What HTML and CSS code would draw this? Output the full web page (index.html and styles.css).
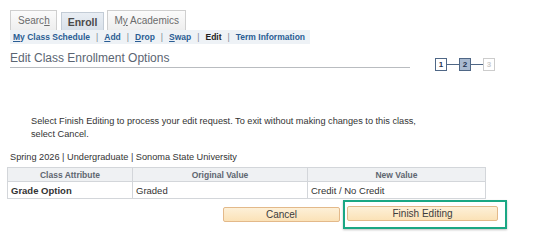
FILE: index.html
```html
<!DOCTYPE html>
<html lang="en">
<head>
    <meta charset="UTF-8">
    <title>Edit Class Enrollment Options</title>
    <link rel="stylesheet" href="styles.css">
</head>
<body>
    <div class="tabs">
        <div class="tab">Searc<u>h</u></div>
        <div class="tab active">Enroll</div>
        <div class="tab">M<u>y</u> Academics</div>
    </div>
    <div class="subnav">
        <a href="#"><u>M</u>y Class Schedule</a><span class="sep">|</span>
        <a href="#"><u>A</u>dd</a><span class="sep">|</span>
        <a href="#"><u>D</u>rop</a><span class="sep">|</span>
        <a href="#"><u>S</u>wap</a><span class="sep">|</span>
        <span class="current">Edit</span><span class="sep">|</span>
        <a href="#">Term Information</a>
    </div>

    <div class="title-row">
        <h1 class="title">Edit Class Enrollment Options</h1>
        <div class="steps">
            <span class="step done">1</span>
            <span class="link"></span>
            <span class="step current">2</span>
            <span class="link"></span>
            <span class="step todo">3</span>
        </div>
    </div>

    <p class="instructions">
        Select Finish Editing to process your edit request. To exit without making changes to this class,<br>
        select Cancel.
    </p>

    <div class="term">Spring 2026 | Undergraduate | Sonoma State University</div>

    <table class="changes">
        <tr>
            <th class="col-attr">Class Attribute</th>
            <th class="col-orig">Original Value</th>
            <th>New Value</th>
        </tr>
        <tr>
            <td class="attr">Grade Option</td>
            <td>Graded</td>
            <td>Credit / No Credit</td>
        </tr>
    </table>

    <div class="actions">
        <button class="btn cancel">Cancel</button>
        <div class="highlight">
            <button class="btn finish">Finish Editing</button>
        </div>
    </div>
</body>
</html>
```

FILE: styles.css
```css
* {
    margin: 0;
    padding: 0;
    box-sizing: border-box;
}

body {
    width: 540px;
    height: 241px;
    overflow: hidden;
    background-color: #ffffff;
    font-family: Arial, "Liberation Sans", sans-serif;
    color: #333333;
}

.tabs {
    display: flex;
    align-items: flex-end;
    gap: 4px;
    padding: 10px 0 0 10px;
    height: 30px;
}

.tab {
    height: 20px;
    padding: 0 6px 0 7px;
    border: 1px solid #cfcfcf;
    border-bottom: none;
    background: linear-gradient(#fbfbfb, #eeeeee);
    color: #6b6b6b;
    font-size: 10px;
    line-height: 19px;
    white-space: nowrap;
}

.tab.active {
    height: 18px;
    padding: 0 6px;
    background: linear-gradient(#e9eef4, #d9e1ea);
    border-color: #c3ccd6;
    color: #4a4a4a;
    font-weight: bold;
    font-size: 10.5px;
    line-height: 18px;
}

.tab:last-child {
    margin-left: -1px;
    padding: 0 6px;
}

.subnav {
    display: flex;
    align-items: center;
    width: 300px;
    height: 14px;
    margin-left: 10px;
    padding-left: 3px;
    background-color: #eef2f6;
    font-size: 8.5px;
    font-weight: bold;
    white-space: nowrap;
}

.subnav > * {
    flex-shrink: 0;
}

.subnav a {
    color: #2a5d94;
    text-decoration: none;
}

.subnav .current {
    color: #222222;
}

.subnav .sep {
    color: #7d8793;
    font-weight: normal;
    padding: 0 6px;
}

.title-row {
    display: flex;
    align-items: flex-end;
    margin-top: 8px;
    padding-left: 10px;
}

.title {
    width: 400px;
    height: 16px;
    border-bottom: 1px solid #b9bcc0;
    color: #5b6572;
    font-size: 12px;
    font-weight: normal;
    line-height: 13px;
}

.steps {
    display: flex;
    align-items: center;
    margin: 0 0 -3px 25px;
}

.step {
    width: 12px;
    height: 13px;
    border: 1px solid #4f6786;
    background-color: #ffffff;
    color: #1f3350;
    font-size: 8px;
    font-weight: bold;
    line-height: 11px;
    text-align: center;
}

.step.current {
    background-color: #a9bad0;
}

.step.todo {
    border-color: #cccccc;
    color: #cccccc;
}

.link {
    width: 12px;
    height: 1px;
    background-color: #4f6786;
}

.link:last-of-type {
    background-color: #c9c9c9;
}

.instructions {
    margin: 47px 0 0 31px;
    font-size: 9.2px;
    line-height: 13px;
    color: #333333;
}

.term {
    margin: 11px 0 0 10px;
    font-size: 9.2px;
    color: #333333;
}

.changes {
    margin: 5px 0 0 7px;
    width: 479px;
    border-collapse: collapse;
    border: 1px solid #d3d6da;
}

.changes th {
    height: 14px;
    background-color: #eff1f3;
    border: 1px solid #d3d6da;
    color: #5e6670;
    font-size: 8.5px;
    font-weight: bold;
    text-align: center;
}

.changes td {
    height: 17px;
    padding-left: 3px;
    border-right: 1px solid #d3d6da;
    color: #333333;
    font-size: 9.5px;
}

.changes .col-attr {
    width: 125px;
}

.changes .col-orig {
    width: 175px;
}

.changes td.attr {
    font-weight: bold;
    font-size: 9.5px;
}

.actions {
    display: flex;
    align-items: center;
    margin: 1px 0 0 223px;
    gap: 3px;
}

.btn {
    height: 15px;
    border: 1px solid #e3b98a;
    border-radius: 2px;
    background: linear-gradient(#fdf0d8, #fbe2b7);
    color: #3c3c3c;
    font-family: Arial, "Liberation Sans", sans-serif;
    font-size: 10px;
}

.cancel {
    width: 117px;
}

.highlight {
    padding: 4px 7px 6px 2px;
    border: 2px solid #1aa784;
    box-shadow: 0 1px 2px rgba(0, 0, 0, 0.25);
}

.finish {
    width: 151px;
    display: block;
}
```
